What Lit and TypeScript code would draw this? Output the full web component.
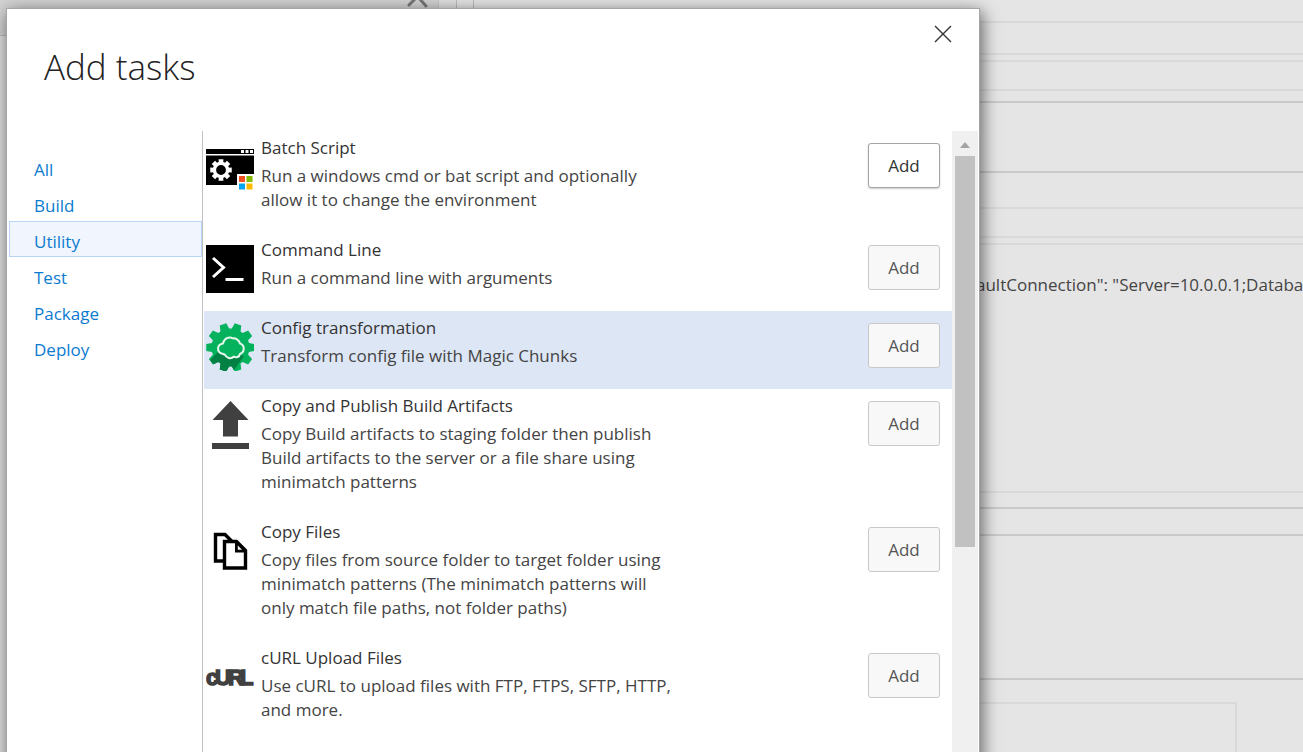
import { LitElement, html, css, svg } from "lit";
import { customElement, property, state } from "lit/decorators.js";

interface Task {
  id: string;
  name: string;
  description: string;
}

const CATEGORIES = ["All", "Build", "Utility", "Test", "Package", "Deploy"];

const TASKS: Task[] = [
  { id: "batch", name: "Batch Script", description: "Run a windows cmd or bat script and optionally allow it to change the environment" },
  { id: "cmd", name: "Command Line", description: "Run a command line with arguments" },
  { id: "config", name: "Config transformation", description: "Transform config file with Magic Chunks" },
  { id: "publish", name: "Copy and Publish Build Artifacts", description: "Copy Build artifacts to staging folder then publish Build artifacts to the server or a file share using minimatch patterns" },
  { id: "copy", name: "Copy Files", description: "Copy files from source folder to target folder using minimatch patterns (The minimatch patterns will only match file paths, not folder paths)" },
  { id: "curl", name: "cURL Upload Files", description: "Use cURL to upload files with FTP, FTPS, SFTP, HTTP, and more." },
];

const teeth = (count: number, cx: number, cy: number, inner: number, outer: number, base: number, tip: number) => {
  const points: string[] = [];
  for (let i = 0; i < count; i++) {
    const mid = (i + 0.5) * ((2 * Math.PI) / count);
    for (const [r, a] of [[inner, -base], [outer, -tip], [outer, tip], [inner, base]]) {
      points.push(`${(cx + r * Math.sin(mid + a)).toFixed(2)},${(cy - r * Math.cos(mid + a)).toFixed(2)}`);
    }
  }
  return points.join(" ");
};

const ICONS: Record<string, unknown> = {
  batch: svg`
    <rect x="0" y="6" width="48" height="5" fill="#000"/>
    <rect x="0" y="12.500" width="48" height="29.500" fill="#000"/>
    <rect x="35" y="7" width="3" height="3" fill="#fff"/>
    <rect x="39.5" y="7" width="3" height="3" fill="#fff"/>
    <rect x="44" y="7" width="3" height="3" fill="#fff"/>
    <polygon points=${teeth(8, 15, 27, 7.6, 11, 0.3, 0.22)} fill="#fff" transform="rotate(22.5 15 27)"/>
    <circle cx="15" cy="27" r="6.6" fill="#000" stroke="#fff" stroke-width="3.4"/>
    <rect x="31" y="31" width="17" height="17" fill="#fff"/>
    <rect x="33" y="33" width="6" height="6" fill="#f25022"/>
    <rect x="40.5" y="33" width="6" height="6" fill="#7fba00"/>
    <rect x="33" y="40.500" width="6" height="6" fill="#00a4ef"/>
    <rect x="40.5" y="40.500" width="6" height="6" fill="#ffb900"/>`,
  cmd: svg`
    <rect width="48" height="48" fill="#000"/>
    <path d="M7 13 17.500 22.500 7 32" fill="none" stroke="#fff" stroke-width="3"/>
    <path d="M19.5 34.5H37.5" stroke="#fff" stroke-width="3"/>`,
  config: svg`
    <defs><clipPath id="gear"><polygon points=${teeth(10, 24.5, 24.5, 18, 24.5, 0.27, 0.14)}/><circle cx="24.5" cy="24.5" r="19"/></clipPath></defs>
    <g clip-path="url(#gear)">
      <rect width="50" height="50" fill="#04b15c"/>
      <path d="M13 28 4 37 14 50H26L38 33Z" fill="#038043"/>
    </g>
    <path d="M17.500 31.800C11.500 30.500 11.500 22.500 18 21.500C19 16.500 24 14 28 16.500C30 15.500 34 18 35 21.500C40 23 40 30 35 32C34.500 35 31 36 29 34.500C26 37.500 21 36 20 32.800Z" transform="translate(-1 -1)" fill="#04b15c" stroke="#e5f8ee" stroke-width="2" stroke-linejoin="round"/>`,
  publish: svg`
    <path d="M24.500 0 42.500 19H32V35.500H17V19H6.500Z" fill="#404040"/>
    <rect x="6" y="42" width="37" height="6" fill="#404040"/>`,
  copy: svg`
    <path d="M18 34H9.500V7.500H19L25.500 14" fill="none" stroke="#000" stroke-width="3.400"/>
    <path d="M18.500 14.500H30.500L39.500 23.500V41H18.500Z" fill="#fff" stroke="#000" stroke-width="3.400"/>
    <path d="M29 14H31L40 23V25.500H29Z" fill="#000"/>
    <path d="M31.800 18.500V22.800H36Z" fill="#fff"/>`,
  curl: svg`
    <g fill="#404040" stroke="#404040" stroke-width="1.500" font-family="Liberation Sans, sans-serif" font-weight="700" font-size="22">
      <text y="32" x="0 9 22 34">cURL</text>
    </g>`,
};

@customElement("task-row")
class TaskRow extends LitElement {
  @property({ attribute: false }) task!: Task;
  @property({ type: Boolean }) primary = false;

  static styles = css`
    :host { display: grid; grid-template-columns: 48px minmax(0, 1fr) 72px; column-gap: 7px; padding: 5px 12px 18px 2px; }
    :host([selected]) { background: #dde6f5; }
    .icon { width: 48px; height: 48px; margin-top: 7px; }
    .text { max-width: 420px; margin-bottom: 3px; }
    h2 { margin: 0 0 4px; font-size: 17px; line-height: 24px; font-weight: 400; color: #333; }
    p { margin: 0; font-size: 17px; line-height: 24px; color: #444; }
    button { height: 45px; margin-top: 7px; padding: 0; font: inherit; font-size: 17px; color: #555; background: #f8f8f8; border: 1px solid #c8c8c8; border-radius: 3px; }
    button.primary { color: #333; background: #fff; border-color: #a4a4a4; box-shadow: 0 1px 2px #ccc; }
  `;

  render() {
    return html`
      <svg class="icon" viewBox="0 0 48 48" aria-hidden="true">${ICONS[this.task.id]}</svg>
      <div class="text">
        <h2>${this.task.name}</h2>
        <p>${this.task.description}</p>
      </div>
      <button class=${this.primary ? "primary" : ""} aria-label="Add ${this.task.name}">Add</button>
    `;
  }
}

@customElement("build-editor")
class BuildEditor extends LitElement {
  static styles = css`
    :host { display: grid; grid-template-columns: 438px 18px 18px minmax(0, 1fr); height: 100%; background: #e5e5e5; }
    .list { background: #e0e0e0; }
    .header { box-sizing: border-box; height: 36px; background: #d3d3d3; border-bottom: 1px solid #bbb; display: flex; justify-content: flex-end; padding-right: 8px; }
    .header svg { width: 24px; height: 8px; }
    .gutter { background: #e0e0e0; border-left: 1px solid #c8c8c8; }
    .handle { border-left: 1px solid #bbb; border-right: 1px solid #bbb; }
    .form { display: flex; flex-direction: column; }
    .row { box-sizing: border-box; flex: none; border-bottom: 2px solid #d9d9d9; }
    .strong { border-bottom-color: #c9c9c9; }
    .h7 { height: 7px; }
    .h12 { height: 12px; }
    .h16 { height: 16px; }
    .h23 { height: 23px; }
    .h27 { height: 27px; }
    .h29 { height: 29px; }
    .h32 { height: 32px; }
    .h36 { height: 36px; }
    .h70 { height: 70px; }
    .h144 { height: 144px; }
    .value { height: 248px; padding: 28px 0 0 502px; font-size: 17px; line-height: 24px; color: #444; white-space: nowrap; }
    .box { flex: 1; margin: 22px 66px 0 0; border: 2px solid #d9d9d9; border-bottom: 0; }
  `;

  render() {
    return html`
      <div class="list"><div class="header">
        <svg viewBox="0 0 24 8" aria-hidden="true"><path d="M3 5 10-2M20 6 12-3" stroke="#777" stroke-width="3" stroke-linecap="round"/></svg>
      </div></div>
      <div class="gutter"></div>
      <div class="handle"></div>
      <div class="form">
        <div class="row h23"></div>
        <div class="row h32"></div>
        <div class="row h7"></div>
        <div class="row h29"></div>
        <div class="row strong h12"></div>
        <div class="row strong h70"></div>
        <div class="row h36"></div>
        <div class="row h29"></div>
        <div class="row h7"></div>
        <div class="row value">aultConnection": "Server=10.0.0.1;Databa</div>
        <div class="row strong h16"></div>
        <div class="row strong h27"></div>
        <div class="row strong h144"></div>
        <div class="box"></div>
      </div>
    `;
  }
}

@customElement("app-root")
class AppRoot extends LitElement {
  @state() category = "Utility";

  static styles = css`
    :host { display: block; position: relative; height: 100vh; overflow: hidden; font-family: "Open Sans", "Noto Sans", sans-serif; }
    .dialog { box-sizing: border-box; position: absolute; top: 8px; left: 6px; right: 323px; bottom: -30px; display: flex; flex-direction: column; background: #fff; border: 1px solid #a5a5a5; box-shadow: 2px 4px 16px rgba(0, 0, 0, 0.6); }
    header { display: flex; justify-content: space-between; align-items: flex-start; flex: none; height: 122px; }
    h1 { margin: 30px 0 0 37px; font-size: 35px; line-height: 56px; font-weight: 300; color: #222; }
    .close { width: 28px; height: 28px; margin: 11px 22px 0 0; padding: 0; border: 0; background: none; }
    .close svg { display: block; width: 28px; height: 28px; }
    .body { flex: 1; min-height: 0; display: grid; grid-template-columns: 195px minmax(0, 1fr) 26px; padding-right: 1px; }
    nav { display: flex; flex-direction: column; padding: 18px 0 0 2px; }
    nav a { box-sizing: border-box; height: 36px; border: 1px solid transparent; padding: 5px 0 0 24px; font-size: 17px; line-height: 30px; color: #0b7bd0; text-decoration: none; }
    nav a.current { background: #f1f6fe; border-color: #b8d4f7; }
    .tasks { border-left: 1px solid #c0c0c0; padding-left: 1px; overflow: hidden; }
    .scroll { display: flex; flex-direction: column; align-items: center; background: #f0f0f0; }
    .arrow { width: 26px; height: 25px; }
    .thumb { width: 20px; height: 391px; background: #c1c1c1; }
  `;

  private select(event: Event, name: string) {
    event.preventDefault();
    this.category = name;
  }

  render() {
    return html`
      <build-editor></build-editor>
      <section class="dialog" role="dialog" aria-labelledby="title">
        <header>
          <h1 id="title">Add tasks</h1>
          <button class="close" aria-label="Close">
            <svg viewBox="0 0 28 28"><path d="M6 6 22 22M22 6 6 22" stroke="#333" stroke-width="1.400"/></svg>
          </button>
        </header>
        <div class="body">
          <nav>
            ${CATEGORIES.map((name) => html`<a href="#${name}" class=${name === this.category ? "current" : ""} @click=${(e: Event) => this.select(e, name)}>${name}</a>`)}
          </nav>
          <div class="tasks">
            ${TASKS.map((task, i) => html`<task-row .task=${task} ?primary=${i === 0} ?selected=${task.id === "config"}></task-row>`)}
          </div>
          <div class="scroll" aria-hidden="true">
            <svg class="arrow" viewBox="0 0 26 25"><path d="M8 17 13 11 18 17Z" fill="#a3a3a3"/></svg>
            <div class="thumb"></div>
          </div>
        </div>
      </section>
    `;
  }
}
